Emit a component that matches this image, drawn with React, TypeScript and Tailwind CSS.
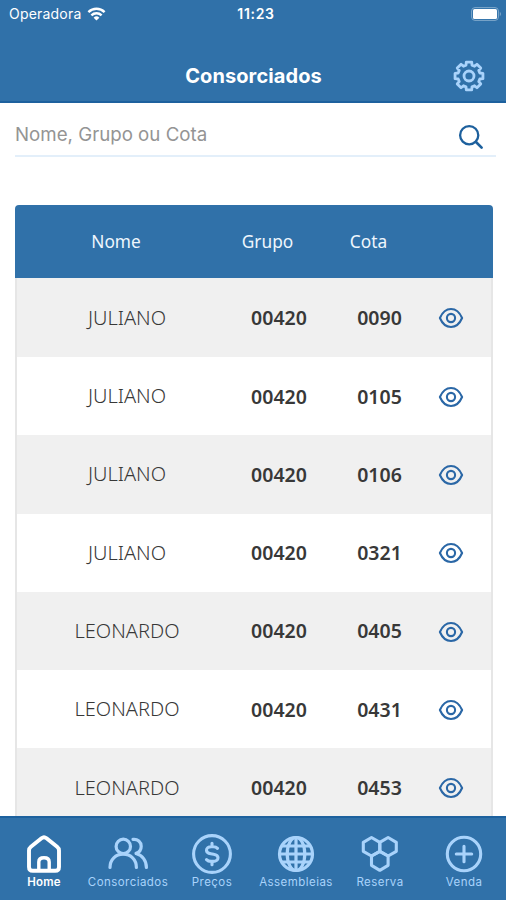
import { useState } from "react";

interface Member {
  name: string;
  group: string;
  quota: string;
}

const members: Member[] = [
  { name: "JULIANO", group: "00420", quota: "0090" },
  { name: "JULIANO", group: "00420", quota: "0105" },
  { name: "JULIANO", group: "00420", quota: "0106" },
  { name: "JULIANO", group: "00420", quota: "0321" },
  { name: "LEONARDO", group: "00420", quota: "0405" },
  { name: "LEONARDO", group: "00420", quota: "0431" },
  { name: "LEONARDO", group: "00420", quota: "0453" },
];

function WifiIcon() {
  return (
    <svg width="19" height="14" viewBox="0 0 18 14" fill="none" stroke="#fff" strokeWidth="2.4">
      <path d="M.9 5.1a11.6 11.6 0 0 1 16.2 0" />
      <path d="M3.9 8.3a7.3 7.3 0 0 1 10.2 0" />
      <path d="M9 13.6 6.1 10.7a4.2 4.2 0 0 1 5.8 0z" fill="#fff" stroke="none" />
    </svg>
  );
}

function BatteryIcon() {
  return (
    <svg width="31" height="14" viewBox="0 0 31 14" fill="none">
      <rect x=".6" y=".6" width="26.8" height="12.8" rx="3.4" stroke="#7fa8cb" strokeWidth="1" />
      <rect x="2" y="2" width="24" height="10" rx="1.5" fill="#fff" />
      <path d="M28.8 4.8c1.5.8 1.5 3.6 0 4.4z" fill="#7fa8cb" />
    </svg>
  );
}

function GearIcon() {
  // eight teeth, four points each
  const points = Array.from({ length: 8 }).flatMap((_, i) =>
    [
      [-15.5, 11.2],
      [-11, 14.2],
      [11, 14.2],
      [15.5, 11.2],
    ].map(([offset, r]) => {
      const a = ((i * 45 + offset - 90) * Math.PI) / 180;
      return `${(16 + r * Math.cos(a)).toFixed(2)},${(16 + r * Math.sin(a)).toFixed(2)}`;
    })
  );
  return (
    <svg width="32" height="32" viewBox="0 0 32 32" fill="none" stroke="#a9d3fb" strokeWidth="2.8" strokeLinejoin="round">
      <polygon points={points.join(" ")} />
      <circle cx="16" cy="16" r="5" />
    </svg>
  );
}

function SearchIcon() {
  return (
    <svg width="26" height="26" viewBox="0 0 26 26" fill="none" stroke="#1d609d" strokeWidth="2.3" strokeLinecap="round">
      <circle cx="11.2" cy="11.2" r="9.1" />
      <path d="m18 18 5.6 5.6" strokeWidth="2.7" />
    </svg>
  );
}

function EyeIcon() {
  return (
    <svg width="26" height="22" viewBox="0 0 26 22" fill="none" stroke="#2a67a6" strokeWidth="2.1">
      <path d="M1.9 11C4.4 5.2 8.4 2 13 2s8.6 3.2 11.1 9C21.6 16.8 17.6 20 13 20S4.4 16.8 1.9 11z" strokeLinejoin="round" />
      <circle cx="13" cy="11" r="4.1" />
    </svg>
  );
}

function HomeIcon() {
  return (
    <svg width="42" height="42" viewBox="0 0 42 42" fill="none" stroke="#fff" strokeWidth="3.9" strokeLinejoin="round">
      <path d="M6 17.5c0-1.7.6-2.8 1.9-3.8L18.5 5.2c1.6-1.3 3.4-1.3 5 0l10.6 8.5c1.3 1 1.9 2.1 1.9 3.8V34c0 2.5-1.3 3.8-3.8 3.8H9.8C7.3 37.8 6 36.5 6 34z" />
      <path d="M15.8 37.5V29c0-2.8 1.5-4.2 5.2-4.2s5.2 1.4 5.2 4.2v8.5" strokeWidth="3.4" />
    </svg>
  );
}

function UsersIcon() {
  return (
    <svg width="42" height="42" viewBox="0 0 42 42" fill="none" stroke="#a9d3fb" strokeWidth="3.2" strokeLinecap="round">
      <circle cx="16.3" cy="13.4" r="7.2" />
      <path d="M3 34.5c0-8 5.7-13.4 13.2-13.4s13.2 5.4 13.2 13.4" />
      <path d="M26 6.4c4.6-.6 8.2 2.7 8.2 6.9 0 3.3-2.1 6.2-5.2 7" />
      <path d="M29.5 20.8c5.8 1.5 9.9 6.7 9.9 13.7" />
    </svg>
  );
}

function DollarIcon() {
  return (
    <svg width="42" height="42" viewBox="0 0 42 42" fill="none" stroke="#a9d3fb" strokeWidth="3.1" strokeLinecap="round" strokeLinejoin="round">
      <circle cx="21" cy="21" r="18.4" />
      <path d="M26.5 15.4c-1-1.1-2.5-1.6-4.2-1.6h-2.2c-2.7 0-4.6 1.4-4.6 3.5s1.7 3.1 4.3 3.5l2.8.4c2.7.4 4.4 1.5 4.4 3.6s-1.9 3.6-4.7 3.6h-2.2c-1.9 0-3.5-.6-4.6-1.8M21 10.2v3.4M21 28.6v3.2" />
    </svg>
  );
}

function GlobeIcon() {
  return (
    <svg width="42" height="42" viewBox="0 0 42 42" fill="none" stroke="#a9d3fb" strokeWidth="3.2">
      <circle cx="21" cy="21" r="16.5" />
      <ellipse cx="21" cy="21" rx="8.8" ry="16.5" />
      <path d="M21 4v34M4 21h34M7 13h28M7 29h28" />
    </svg>
  );
}

function HexagonsIcon() {
  return (
    <svg width="42" height="42" viewBox="0 0 42 42" fill="none" stroke="#a9d3fb" strokeWidth="3.1" strokeLinejoin="round">
      <path d="m12.5 4.5 8.3 4.8v9L12.5 23l-8.2-4.7v-9z" />
      <path d="m29.1 4.5 8.2 4.8v9L29.1 23l-8.3-4.7v-9z" />
      <path d="m20.8 18.3 8.3 4.7v9.3l-8.3 5-8.3-5V23z" />
    </svg>
  );
}

function PlusIcon() {
  return (
    <svg width="42" height="42" viewBox="0 0 42 42" fill="none" stroke="#a9d3fb" strokeWidth="3.1" strokeLinecap="round">
      <circle cx="21" cy="21" r="16.7" />
      <path d="M21 13.3v15.4M13.3 21h15.4" />
    </svg>
  );
}

const tabs = [
  { label: "Home", icon: HomeIcon },
  { label: "Consorciados", icon: UsersIcon },
  { label: "Preços", icon: DollarIcon },
  { label: "Assembleias", icon: GlobeIcon },
  { label: "Reserva", icon: HexagonsIcon },
  { label: "Venda", icon: PlusIcon },
];

export default function App() {
  const [search, setSearch] = useState("");
  const [activeTab, setActiveTab] = useState("Home");

  return (
    <div className="flex h-[900px] w-[506px] flex-col overflow-hidden bg-white font-['Inter',sans-serif]">
      {/* Header */}
      <header className="h-[103px] shrink-0 border-b-2 border-[#1d619e] bg-[#3071a9] text-white">
        <div className="grid h-7 grid-cols-3 items-center pr-[4px] pb-[1px] pl-[9px]">
          <div className="flex items-center gap-[6px]">
            <span className="text-[14px] tracking-[0.2px]">Operadora</span>
            <WifiIcon />
          </div>
          <span className="pl-[1px] text-center text-[14px] font-semibold tracking-[0.7px]">11:23</span>
          <div className="flex justify-end">
            <BatteryIcon />
          </div>
        </div>
        <div className="grid h-[73px] grid-cols-[1fr_auto_1fr] items-center pt-[23px] pr-[21px] pl-[22px]">
          <span />
          <h1 className="text-[20px] font-bold tracking-[0.1px]">Consorciados</h1>
          <button className="flex justify-end" aria-label="Configurações">
            <GearIcon />
          </button>
        </div>
      </header>

      {/* Search */}
      <div className="mt-[13px] mr-[10px] ml-[15px] flex h-[41px] shrink-0 items-center border-b-2 border-[#e3effa] pr-[12px]">
        <input
          value={search}
          onChange={(e) => setSearch(e.target.value)}
          placeholder="Nome, Grupo ou Cota"
          className="h-full min-w-0 flex-1 pb-[3px] text-[18.7px] outline-none placeholder:text-[#949494]"
        />
        <span className="pt-[2px]">
          <SearchIcon />
        </span>
      </div>

      {/* Table */}
      <main className="mt-12 min-h-0 flex-1 overflow-hidden pr-[13px] pl-[15px] font-['Noto_Sans',sans-serif]">
        <div className="flex h-[73px] items-center rounded-t-[4px] bg-[#3071a9] text-[17.3px] text-[#eef6fd]">
          <span className="w-[202px] text-center">Nome</span>
          <span className="w-[101px] text-center">Grupo</span>
          <span className="w-[101px] text-center">Cota</span>
        </div>
        <div className="border-x-2 border-[#e6e6e6]">
          {members.map((member) => (
            <div
              key={member.quota}
              className="flex h-[78.3px] items-center text-[19.5px] text-[#383838] odd:bg-[#f0f0f0] first:h-[79px]"
            >
              <span className="w-[220px] text-center text-[20px] font-light">{member.name}</span>
              <span className="w-[84px] text-center font-semibold">{member.group}</span>
              <span className="w-[117px] text-center font-semibold">{member.quota}</span>
              <button className="pt-[1px]" aria-label="Visualizar">
                <EyeIcon />
              </button>
            </div>
          ))}
        </div>
      </main>

      {/* Bottom tabs */}
      <nav className="grid h-[84px] shrink-0 grid-cols-6 border-t-2 border-[#1d619e] bg-[#3071a9] pl-[2px]">
        {tabs.map(({ label, icon: Icon }) => (
          <button
            key={label}
            onClick={() => setActiveTab(label)}
            className={`flex flex-col items-center pt-[15px] text-[11.5px] leading-[14px] whitespace-nowrap ${
              activeTab === label ? "font-semibold tracking-[0.2px] text-white" : "tracking-[0.45px] text-[#a9d3fb]"
            }`}
          >
            <Icon />
            <span>{label}</span>
          </button>
        ))}
      </nav>
    </div>
  );
}
